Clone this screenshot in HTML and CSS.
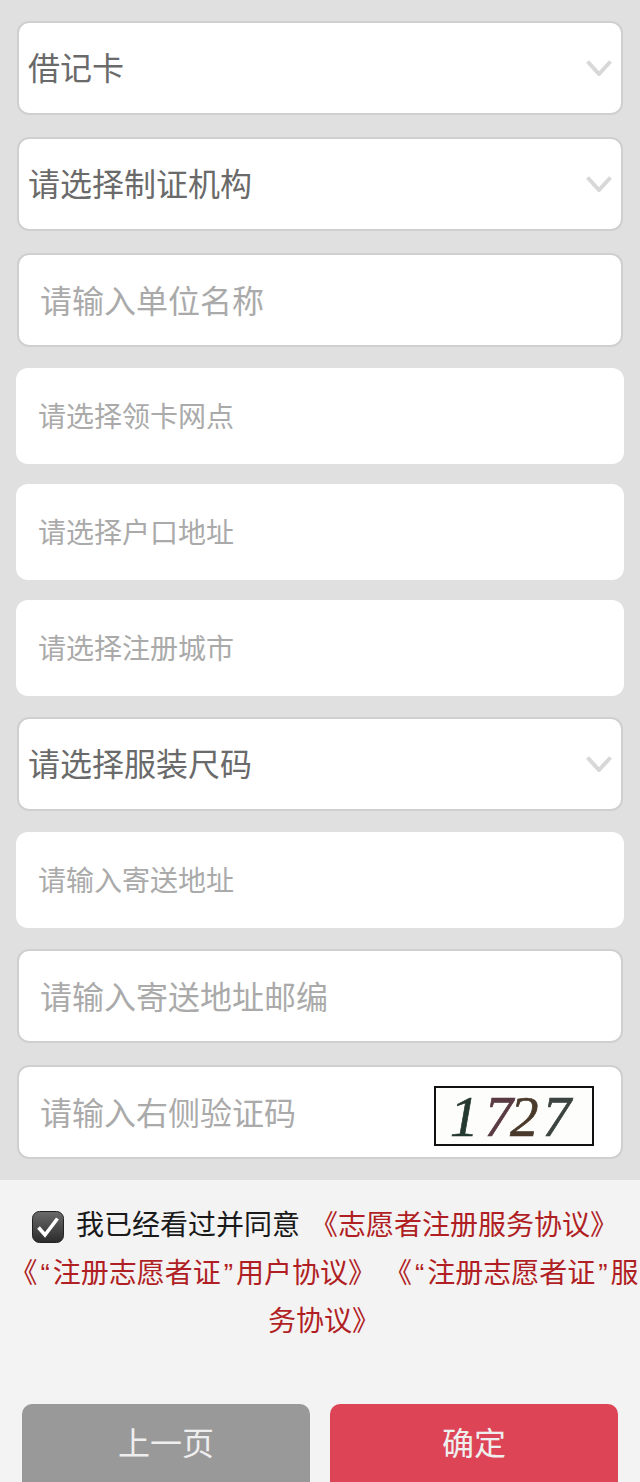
FILE: index.html
```html
<!DOCTYPE html>
<html lang="zh-CN">
<head>
<meta charset="utf-8">
<title>注册</title>
<link rel="stylesheet" href="styles.css">
</head>
<body>
<form class="form">
  <div class="slot"><div class="field bordered select"><span class="value">借记卡</span>
    <svg class="chev" viewBox="0 0 26 16"><path d="M1.5 1.5L13 14L24.5 1.5"/></svg></div></div>
  <div class="slot"><div class="field bordered select"><span class="value">请选择制证机构</span>
    <svg class="chev" viewBox="0 0 26 16"><path d="M1.5 1.5L13 14L24.5 1.5"/></svg></div></div>
  <div class="slot"><div class="field bordered input"><span class="ph">请输入单位名称</span></div></div>
  <div class="slot"><div class="field plain"><span class="ph small">请选择领卡网点</span></div></div>
  <div class="slot"><div class="field plain"><span class="ph small">请选择户口地址</span></div></div>
  <div class="slot"><div class="field plain"><span class="ph small">请选择注册城市</span></div></div>
  <div class="slot"><div class="field bordered select"><span class="value">请选择服装尺码</span>
    <svg class="chev" viewBox="0 0 26 16"><path d="M1.5 1.5L13 14L24.5 1.5"/></svg></div></div>
  <div class="slot"><div class="field plain"><span class="ph small">请输入寄送地址</span></div></div>
  <div class="slot"><div class="field bordered input"><span class="ph">请输入寄送地址邮编</span></div></div>
  <div class="slot"><div class="field bordered input captcha-row"><span class="ph">请输入右侧验证码</span>
    <div class="captcha"><span class="d1">1</span><span class="d2">7</span><span class="d3">2</span><span class="d4">7</span></div></div></div>
</form>
<section class="panel">
  <div class="agree">
    <p class="agree-line"><svg class="check" viewBox="0 0 32 32"><defs><linearGradient id="cb" x1="0" y1="0" x2="0" y2="1"><stop offset="0" stop-color="#6a6a6a"/><stop offset="1" stop-color="#2b2b2b"/></linearGradient></defs><rect x="0.5" y="0.5" width="31" height="31" rx="7" fill="url(#cb)" stroke="#222"/><path d="M6.5 16.5L13 24L25.5 7.5" fill="none" stroke="#fff" stroke-width="3.6"/></svg><span class="agree-text">我已经看过并同意</span><a class="link first">《志愿者注册服务协议》</a></p>
    <p class="links"><a class="link">《<span class="q">“</span>注册志愿者证<span class="q">”</span>用户协议》</a> <a class="link">《<span class="q">“</span>注册志愿者证<span class="q">”</span>服务协议》</a></p>
  </div>
  <div class="actions">
    <button type="button" class="btn prev">上一页</button>
    <button type="button" class="btn ok">确定</button>
  </div>
</section>
</body>
</html>
```
FILE: styles.css
```css
* { box-sizing: border-box; }
html, body { margin: 0; padding: 0; }
body {
  width: 640px;
  height: 1482px;
  overflow: hidden;
  background: #e0e0e0;
  font-family: "Liberation Sans", "Noto Sans CJK SC", sans-serif;
}
.form {
  display: flex;
  flex-direction: column;
  gap: 20px;
  padding: 20px 16px;
}
.slot { height: 96px; display: flex; }
.field {
  flex: 1;
  display: flex;
  align-items: center;
  justify-content: space-between;
  background: #fff;
  border-radius: 12px;
}
.bordered { margin: 1px; border: 2px solid #cfcfcf; }
.select { padding: 0 9px 4px 9px; }
.input { padding: 0 28px 2px 21px; }
.plain { padding: 0 23px 2px 22px; }
.value { font-size: 32px; color: #6a6a6a; }
.ph { font-size: 32px; color: #aaa; }
.ph.small { font-size: 28px; }
.chev { width: 26px; height: 16px; margin-top: 4px; }
.chev path { fill: none; stroke: #d8d8d8; stroke-width: 4; }
.captcha {
  width: 160px;
  height: 60px;
  margin-top: 10px;
  border: 2px solid #111;
  background: #fdfdfb;
  display: flex;
  align-items: center;
  padding-left: 14px;
  font-family: "Liberation Serif", serif;
  font-style: italic;
  font-size: 57px;
  line-height: 1;
  -webkit-text-stroke: 0.7px currentColor;
}
.captcha-row { padding-right: 27px; }
.d1 { color: #24392f; margin-right: 6px; }
.d2 { color: #5a3a44; margin-right: -3px; }
.d3 { color: #4a3a2c; margin-right: 4px; }
.d4 { color: #3c4442; }
.panel {
  height: 302px;
  background: #f3f3f3;
  padding-top: 22px;
  display: flex;
  flex-direction: column;
}
.agree {
  height: 202px;
  font-size: 28px;
  line-height: 48px;
  text-align: center;
  color: #b01f24;
}
.agree-line { margin: 0; padding-left: 10px; }
.links { margin: 0; padding-left: 8px; }
.q { padding: 0 3px; }
.check { width: 32px; height: 32px; vertical-align: -8px; margin-right: 12px; }
.agree-text { color: #1a1a1a; }
.link { color: #b01f24; }
.link.first { margin-left: 10px; }
.actions {
  display: flex;
  justify-content: center;
  gap: 20px;
}
.btn {
  width: 288px;
  height: 78px;
  border: 0;
  border-radius: 10px 10px 0 0;
  padding: 0 0 5px;
  font: inherit;
  font-size: 32px;
  color: #eee;
}
.prev { background: #999; }
.ok { background: #dd4455; }
```
